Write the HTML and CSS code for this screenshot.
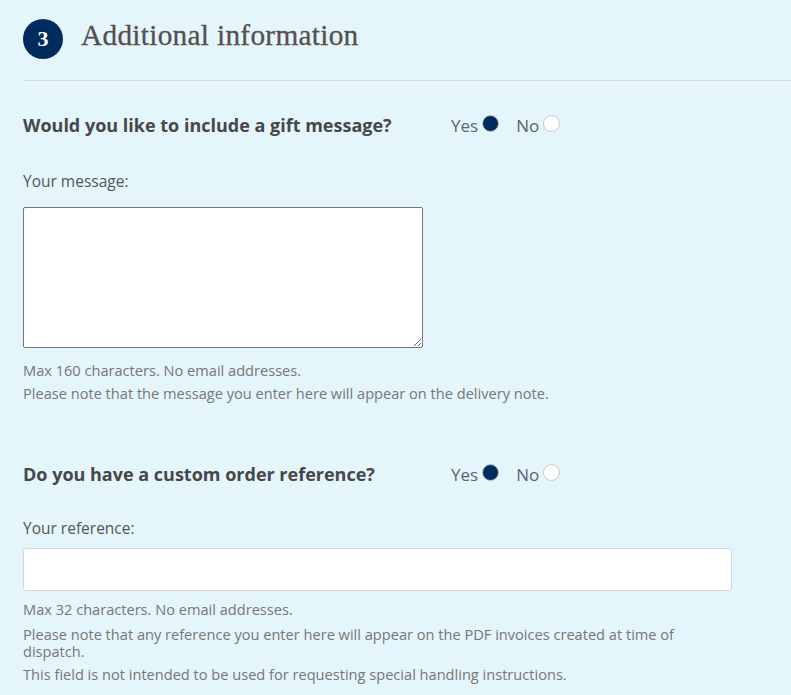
FILE: index.html
```html
<!DOCTYPE html>
<html>
<head>
    <title>Additional information</title>
    <link rel="stylesheet" href="styles.css">
</head>
<body>
    <div class="panel">
        <div class="panel-header">
            <span class="step-number">3</span>
            <h2 class="step-title">Additional information</h2>
        </div>

        <div class="panel-body">
            <div class="question">
                <span class="question-label">Would you like to include a gift message?</span>
                <div class="radio-group">
                    <label class="radio-option">Yes<span class="radio checked"></span></label>
                    <label class="radio-option">No<span class="radio"></span></label>
                </div>
            </div>

            <div class="field">
                <label class="field-label">Your message:</label>
                <textarea class="message-box"></textarea>
                <div class="help">
                    <p>Max 160 characters. No email addresses.</p>
                    <p>Please note that the message you enter here will appear on the delivery note.</p>
                </div>
            </div>

            <div class="question second">
                <span class="question-label">Do you have a custom order reference?</span>
                <div class="radio-group">
                    <label class="radio-option">Yes<span class="radio checked"></span></label>
                    <label class="radio-option">No<span class="radio"></span></label>
                </div>
            </div>

            <div class="field reference-field">
                <label class="field-label">Your reference:</label>
                <input class="reference-box" type="text">
                <div class="help wide">
                    <p>Max 32 characters. No email addresses.</p>
                    <p class="spaced">Please note that any reference you enter here will appear on the PDF invoices created at time of dispatch.</p>
                    <p>This field is not intended to be used for requesting special handling instructions.</p>
                </div>
            </div>
        </div>
    </div>
</body>
</html>
```

FILE: styles.css
```css
body {
    margin: 0;
    padding: 0;
    background-color: #e4f5fc;
    font-family: "Open Sans", Arial, sans-serif;
}

.panel {
    padding-left: 23px;
    height: 695px;
    overflow: hidden;
}

.panel-header {
    display: flex;
    align-items: center;
    gap: 18px;
    height: 77px;
    padding-bottom: 3px;
    border-bottom: 1px solid #d9dcdc;
}

.step-number {
    width: 40px;
    height: 40px;
    border-radius: 50%;
    background-color: #002b5f;
    color: white;
    font-family: "Liberation Serif", serif;
    font-weight: bold;
    font-size: 22px;
    display: flex;
    align-items: center;
    justify-content: center;
}

.step-title {
    margin: 0;
    font-family: "Liberation Serif", serif;
    font-weight: normal;
    font-size: 29.3px;
    color: #55504d;
    letter-spacing: 0.3px;
    padding-bottom: 6px;
    -webkit-text-stroke: 0.3px #55504d;
}

.panel-body {
    padding-top: 32px;
    width: 709px;
}

.question {
    display: flex;
    align-items: center;
    height: 24px;
}

.question.second {
    margin-top: 60px;
}

.question-label {
    width: 428px;
    font-weight: bold;
    font-size: 18px;
    color: #474747;
}

.radio-group {
    display: flex;
    gap: 17px;
}

.radio-option {
    display: flex;
    align-items: center;
    gap: 4px;
    font-size: 17px;
    color: #5d6470;
}

.radio {
    width: 15px;
    height: 15px;
    margin-top: -3px;
    border-radius: 50%;
    border: 1px solid #c9c9c9;
    background-color: white;
}

.radio.checked {
    background-color: #002b5f;
}

.field {
    margin-top: 33px;
}

.field.reference-field {
    margin-top: 31px;
}

.field-label {
    display: block;
    font-size: 15.5px;
    color: #555;
    margin-bottom: 9px;
}

.message-box {
    display: block;
    width: 400px;
    height: 141px;
    box-sizing: border-box;
    border: 1px solid #767676;
    border-radius: 2px;
    background-color: white;
    margin: 15px 0 0 0;
}

.reference-box {
    display: block;
    width: 709px;
    height: 43px;
    box-sizing: border-box;
    border: 1px solid #d6d6d6;
    border-radius: 3px;
    background-color: white;
    margin: 0;
}

.help {
    margin-top: 14px;
    font-size: 14.6px;
    color: #777;
}

.help p {
    margin: 0 0 6px 0;
    line-height: 17px;
}

.help p.spaced {
    margin-top: 8px;
}

.help.wide {
    margin-top: 10px;
}
```
